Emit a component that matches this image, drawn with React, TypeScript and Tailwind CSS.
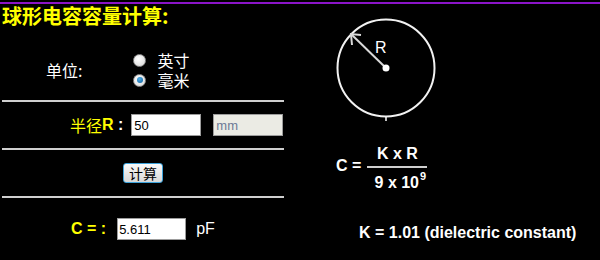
import React from "react";

const cjk = { fontFamily: '"Noto Sans CJK SC", "Noto Sans", sans-serif' };
const arial = { fontFamily: '"Liberation Sans", Arial, sans-serif' };

function Radio({ checked }: { checked?: boolean }) {
  return (
    <span className="flex h-[13px] w-[13px] items-center justify-center rounded-full border border-[#8f8f8f] bg-[radial-gradient(circle_at_40%_35%,#ffffff,#d4d4d4)]">
      {checked && (
        <span className="h-[6px] w-[6px] rounded-full bg-[radial-gradient(circle_at_40%_35%,#4fb0ea,#0d5c99)]" />
      )}
    </span>
  );
}

function Hr() {
  return <div className="mx-[2px] h-[2px] bg-[#cfcfcf]" />;
}

export default function App() {
  return (
    <div className="h-[260px] w-[600px] overflow-hidden bg-black">
      <div className="h-[2px] bg-black" />
      <div className="h-[2px] bg-[#8b14c8]" />
      <div className="flex">
        {/* Left column */}
        <div className="w-[286px] flex flex-col">
          <div
            className="h-[24px] pl-[2px] text-[20px] font-bold leading-[24px] text-[#ffff00]"
            style={cjk}
          >
            球形电容容量计算:
          </div>
          <div className="flex h-[72px] items-start pt-[22px]">
            <div
              className="ml-[46px] mt-[10px] h-[20px] text-[16px] leading-[20px] text-white"
              style={cjk}
            >
              单位:
            </div>
            <div className="ml-[51px] flex flex-col">
              <div className="flex h-[20px] items-center">
                <Radio />
                <span className="ml-[11px] text-[16px] leading-[20px] text-white" style={cjk}>
                  英寸
                </span>
              </div>
              <div className="flex h-[20px] items-center">
                <Radio checked />
                <span className="ml-[11px] text-[16px] leading-[20px] text-white" style={cjk}>
                  毫米
                </span>
              </div>
            </div>
          </div>
          <Hr />
          <div className="flex h-[46px] items-center pl-[70px]">
            <span className="text-[16px] leading-[20px] text-[#ffff00]" style={cjk}>
              半径
            </span>
            <span className="text-[16px] font-bold leading-[20px] text-[#ffff00]" style={arial}>
              R
            </span>
            <span className="text-[16px] font-bold leading-[20px] text-white" style={arial}>
              &nbsp;:
            </span>
            <input
              readOnly
              value="50"
              className="ml-[8px] h-[22px] w-[70px] border border-[#9c9c9c] bg-white px-[2px] text-[13px] text-black outline-none"
              style={arial}
            />
            <input
              readOnly
              value="mm"
              className="ml-[12px] h-[22px] w-[70px] border border-[#9c9c9c] bg-[#ebebe4] px-[2px] text-[13px] text-[#6c7a96] outline-none"
              style={arial}
            />
          </div>
          <Hr />
          <div className="flex h-[46px] items-center justify-center">
            <button
              className="flex h-[20px] w-[40px] items-center justify-center rounded-[3px] border border-[#3ea4dc] bg-gradient-to-b from-[#fafafa] to-[#d8d8d8] text-[14px] leading-[18px] text-black"
              style={cjk}
            >
              计算
            </button>
          </div>
          <Hr />
          <div className="flex h-[62px] items-center pl-[71px]">
            <span className="text-[16px] font-bold leading-[20px] text-[#ffff00]" style={arial}>
              C = :
            </span>
            <input
              readOnly
              value="5.611"
              className="ml-[11px] h-[22px] w-[69px] border border-[#9c9c9c] bg-white px-[1px] text-[13px] text-black outline-none"
              style={arial}
            />
            <span className="ml-[10px] text-[16px] leading-[20px] text-white" style={arial}>
              pF
            </span>
          </div>
        </div>

        {/* Right column */}
        <div className="flex flex-1 flex-col pt-[11px]">
          <svg width="120" height="110" viewBox="0 0 120 110" className="ml-[40px]">
            <circle cx="60" cy="53" r="48.5" fill="none" stroke="#f2f2f2" strokeWidth="2" />
            <line x1="60" y1="53" x2="25" y2="19" stroke="#d9d9d9" strokeWidth="2" />
            <polyline points="35,20 25,19 26,30" fill="none" stroke="#d9d9d9" strokeWidth="2" />
            <circle cx="60" cy="53" r="3.5" fill="#ffffff" />
            <line x1="60" y1="102" x2="60" y2="106" stroke="#ffffff" strokeWidth="1.5" />
            <text x="49" y="38" fill="#ffffff" fontSize="16" fontFamily="Liberation Sans, Arial, sans-serif">
              R
            </text>
          </svg>
          <div className="ml-[50px] mt-[20px] flex items-start" style={arial}>
            <span className="mt-[12px] text-[16px] font-bold leading-[18px] text-white">C =</span>
            <div className="ml-[6px] flex w-[60px] flex-col items-center">
              <span className="text-[16px] font-bold leading-[18px] text-white">K x R</span>
              <div className="mt-[3px] h-[2px] w-[60px] bg-[#cfcfcf]" />
              <span className="mt-[6px] pl-[6px] text-[16px] font-bold leading-[18px] text-white">
                9 x 10
                <sup className="relative -top-[8px] ml-[1px] text-[11px] font-bold leading-[0]">9</sup>
              </span>
            </div>
          </div>
          <div
            className="ml-[73px] mt-[32px] text-[16px] font-bold leading-[18px] text-white"
            style={arial}
          >
            K = 1.01 (dielectric constant)
          </div>
        </div>
      </div>
    </div>
  );
}
